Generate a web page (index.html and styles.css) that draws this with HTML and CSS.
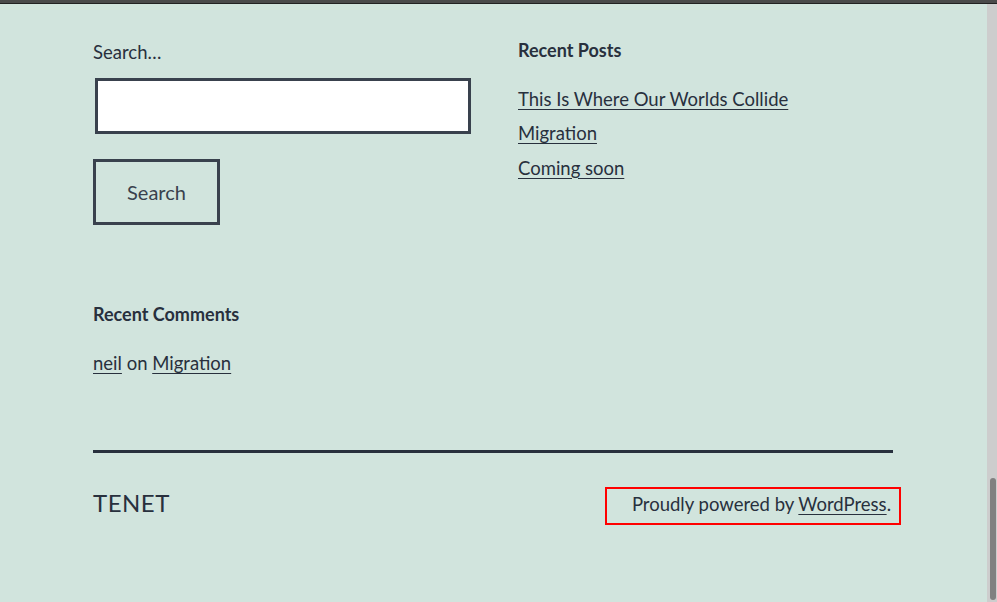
FILE: index.html
```html
<!DOCTYPE html>
<html lang="en">
<head>
<meta charset="utf-8">
<title>TENET</title>
<link rel="stylesheet" href="styles.css">
</head>
<body>
<div class="top-bar"></div>
<div class="viewport">
  <div class="page">
    <div class="widgets">
      <section class="widget search-widget">
        <form class="search-form">
          <label class="search-label" for="s">Search&hellip;</label>
          <input class="search-input" id="s" type="search">
          <button class="search-button" type="button">Search</button>
        </form>
      </section>
      <section class="widget">
        <h2 class="widget-title">Recent Posts</h2>
        <ul class="link-list">
          <li><a href="#">This Is Where Our Worlds Collide</a></li>
          <li><a href="#">Migration</a></li>
          <li><a href="#">Coming soon</a></li>
        </ul>
      </section>
      <section class="widget comments-widget">
        <h2 class="widget-title">Recent Comments</h2>
        <ul class="link-list">
          <li><a href="#">neil</a> on <a href="#">Migration</a></li>
        </ul>
      </section>
    </div>
    <footer class="site-footer">
      <div class="site-name">TENET</div>
      <div class="powered">Proudly powered by <a href="#">WordPress</a>.</div>
    </footer>
  </div>
  <div class="scrollbar"><div class="thumb"></div></div>
</div>
</body>
</html>
```
FILE: styles.css
```css
* { box-sizing: border-box; }
html, body { margin: 0; padding: 0; }
body {
  width: 997px;
  height: 602px;
  overflow: hidden;
  background: #d1e4dd;
  color: #28303d;
  font-family: Lato, "Open Sans", sans-serif;
}
.top-bar {
  height: 4px;
  background: #4a4a4a;
  border-bottom: 1px solid #222;
}
.viewport {
  display: flex;
  height: 598px;
}
.page {
  flex: 1;
  padding: 0 0 0 93px;
}
.scrollbar {
  width: 10px;
  background: #cdcdcd;
  display: flex;
  flex-direction: column;
  justify-content: flex-end;
  align-items: center;
  padding-left: 2px;
}
.thumb {
  width: 6px;
  height: 122px;
  background: #808080;
  border-radius: 3px;
  margin-bottom: 2px;
}
.widgets {
  width: 800px;
  display: grid;
  grid-template-columns: 375px 375px;
  column-gap: 50px;
  padding-top: 34px;
}
.widget-title {
  margin: 0;
  font-size: 18px;
  font-weight: 700;
  line-height: 24px;
}
.search-form {
  display: flex;
  flex-direction: column;
  align-items: flex-start;
}
.search-label {
  font-size: 18.5px;
  line-height: 30px;
  margin-top: -1px;
}
.search-input {
  margin: 11px 0 0 2px;
  width: 376px;
  height: 56px;
  border: 3px solid #39414d;
  background: #fff;
  padding: 0;
  outline: none;
}
.search-button {
  margin-top: 25px;
  width: 127px;
  height: 66px;
  border: 3px solid #39414d;
  background: transparent;
  color: #39414d;
  font-family: inherit;
  font-size: 20px;
  padding: 0;
}
.link-list {
  list-style: none;
  margin: 20px 0 0;
  padding: 0;
  font-size: 18.5px;
  line-height: 34.3px;
}
.link-list a {
  color: #28303d;
  text-decoration: underline;
  text-decoration-thickness: 1px;
  text-underline-offset: 3px;
}
.comments-widget {
  margin-top: 77px;
}
.site-footer {
  width: 800px;
  margin-top: 70px;
  border-top: 3px solid #28303d;
  display: flex;
  justify-content: space-between;
  align-items: flex-start;
  padding-top: 33px;
}
.site-name {
  font-size: 24px;
  letter-spacing: 0.5px;
  line-height: 34px;
}
.powered {
  font-size: 18.5px;
  line-height: 24px;
  border: 2px solid #f00;
  padding: 3px 8px 7px 25px;
  margin-right: -8px;
  margin-top: 1px;
}
.powered a {
  color: #28303d;
  text-decoration: underline;
  text-decoration-thickness: 1px;
  text-underline-offset: 3px;
}
```
